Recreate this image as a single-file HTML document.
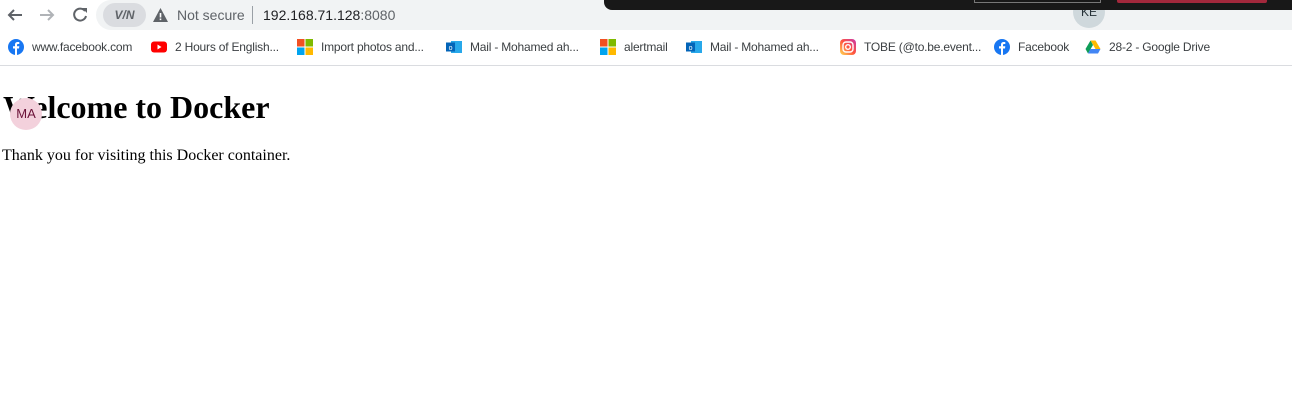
<!DOCTYPE html>
<html><head><style>
*{box-sizing:border-box}
body{margin:0;width:1292px;height:401px;overflow:hidden;background:#fff;position:relative;font-family:"Liberation Sans",sans-serif}
.top{position:absolute;left:0;top:0;width:1292px;height:30px;background:#fff}
.omni{position:absolute;left:96px;top:0;width:1196px;height:30px;background:#f1f3f4;border-radius:15px 0 0 15px}
.bm{position:absolute;top:30px;left:0;width:1292px;height:36px;border-bottom:1px solid #dadce0;font-size:12px;color:#3c4043;letter-spacing:-0.2px}
.bm span{position:absolute;top:10px;white-space:nowrap}
.ic{position:absolute;top:9px;width:16px;height:16px}
.content{position:absolute;top:68px;left:0;right:0;font-family:"Liberation Serif",serif;color:#000}
h1{font-size:32px;margin:21px 3px;line-height:37px}
p{font-size:16px;margin:0 2px;line-height:18px}
</style></head><body>
<div class="top"></div>
<div class="omni"></div>
<svg style="position:absolute;left:6px;top:6px" width="18" height="18"><path d="M16 9H3M8 4L3 9l5 5" stroke="#5f6368" stroke-width="2" fill="none"/></svg>
<svg style="position:absolute;left:38px;top:6px" width="18" height="18"><path d="M2 9h13M10 4l5 5-5 5" stroke="#b0b3b7" stroke-width="2" fill="none"/></svg>
<svg style="position:absolute;left:71px;top:6px" width="18" height="18"><path d="M14 5A6 6 0 1 0 15 10" stroke="#5f6368" stroke-width="2" fill="none"/><path d="M11 2h5v5z" fill="#5f6368"/></svg>
<div style="position:absolute;left:103px;top:3px;width:43px;height:24px;border-radius:12px;background:#dadce0;font-size:12px;font-weight:bold;color:#5f6368;text-align:center;line-height:24px;font-style:italic">V/N</div>
<svg style="position:absolute;left:153px;top:8px" width="15" height="14"><path d="M7.5 0L15 14H0z" fill="#5f6368"/><rect x="6.7" y="5" width="1.6" height="4.5" fill="#fff"/><rect x="6.7" y="10.5" width="1.6" height="1.6" fill="#fff"/></svg>
<div style="position:absolute;left:177px;top:7px;font-size:14px;color:#5f6368">Not secure</div>
<div style="position:absolute;left:252px;top:6px;width:1px;height:18px;background:#9aa0a6"></div>
<div style="position:absolute;left:263px;top:7px;font-size:14px;color:#202124">192.168.71.128<span style="color:#5f6368">:8080</span></div>
<div style="position:absolute;left:1073px;top:-4px;width:32px;height:32px;border-radius:50%;background:#cfd8dc;font-size:12px;color:#263238;text-align:center;line-height:32px">KE</div>
<div style="position:absolute;left:604px;top:0;width:688px;height:10px;background:#181818;border-radius:0 0 0 8px"></div>
<div style="position:absolute;left:974px;top:0;width:127px;height:3px;border:1px solid #777;border-top:none"></div>
<div style="position:absolute;left:1117px;top:0;width:150px;height:3px;background:#a3283c;border-radius:0 0 2px 2px"></div>
<div class="bm">
<svg class="ic" style="left:8px" viewBox="0 0 16 16"><circle cx="8" cy="8" r="8" fill="#1877f2"/><path d="M9 16V9.5h2l.3-2.2H9V6c0-.6.2-1 1-1h1.3V3.1C11 3 10.4 3 9.7 3 8.2 3 7 3.9 7 5.6v1.7H5v2.2h2V16z" fill="#fff"/></svg><span style="left:32px">www.facebook.com</span>
<svg class="ic" style="left:151px" viewBox="0 0 16 16"><rect y="2.5" width="16" height="11" rx="3" fill="#f00"/><path d="M6.5 5.5v5l4-2.5z" fill="#fff"/></svg><span style="left:175px">2 Hours of English...</span>
<svg class="ic" style="left:297px" viewBox="0 0 16 16"><rect width="7.5" height="7.5" fill="#f25022"/><rect x="8.5" width="7.5" height="7.5" fill="#7fba00"/><rect y="8.5" width="7.5" height="7.5" fill="#00a4ef"/><rect x="8.5" y="8.5" width="7.5" height="7.5" fill="#ffb900"/></svg><span style="left:321px">Import photos and...</span>
<svg class="ic" style="left:446px" viewBox="0 0 16 16"><rect x="5" y="2" width="11" height="12" fill="#28a8ea"/><rect x="0" y="3.5" width="9" height="9" fill="#0364b8"/><text x="4.5" y="11" font-size="7" fill="#fff" text-anchor="middle" font-family="Liberation Sans">o</text></svg><span style="left:470px">Mail - Mohamed ah...</span>
<svg class="ic" style="left:600px" viewBox="0 0 16 16"><rect width="7.5" height="7.5" fill="#f25022"/><rect x="8.5" width="7.5" height="7.5" fill="#7fba00"/><rect y="8.5" width="7.5" height="7.5" fill="#00a4ef"/><rect x="8.5" y="8.5" width="7.5" height="7.5" fill="#ffb900"/></svg><span style="left:624px">alertmail</span>
<svg class="ic" style="left:686px" viewBox="0 0 16 16"><rect x="5" y="2" width="11" height="12" fill="#28a8ea"/><rect x="0" y="3.5" width="9" height="9" fill="#0364b8"/><text x="4.5" y="11" font-size="7" fill="#fff" text-anchor="middle" font-family="Liberation Sans">o</text></svg><span style="left:710px">Mail - Mohamed ah...</span>
<svg class="ic" style="left:840px" viewBox="0 0 16 16"><defs><linearGradient id="g" x1="0" y1="1" x2="1" y2="0"><stop offset="0" stop-color="#fd5"/><stop offset=".5" stop-color="#ff543e"/><stop offset="1" stop-color="#c837ab"/></linearGradient></defs><rect width="16" height="16" rx="4" fill="url(#g)"/><rect x="3" y="3" width="10" height="10" rx="3" fill="none" stroke="#fff" stroke-width="1.4"/><circle cx="8" cy="8" r="2.3" fill="none" stroke="#fff" stroke-width="1.4"/></svg><span style="left:864px">TOBE (@to.be.event...</span>
<svg class="ic" style="left:994px" viewBox="0 0 16 16"><circle cx="8" cy="8" r="8" fill="#1877f2"/><path d="M9 16V9.5h2l.3-2.2H9V6c0-.6.2-1 1-1h1.3V3.1C11 3 10.4 3 9.7 3 8.2 3 7 3.9 7 5.6v1.7H5v2.2h2V16z" fill="#fff"/></svg><span style="left:1018px">Facebook</span>
<svg class="ic" style="left:1085px" viewBox="0 0 16 16"><path d="M5.5 1.5h5l5 8.5h-5z" fill="#ffba00"/><path d="M5.5 1.5L0.5 10l2.5 4.5 5-8.5z" fill="#0f9d58"/><path d="M3 14.5h10l2.5-4.5h-10z" fill="#4285f4"/></svg><span style="left:1109px">28-2 - Google Drive</span>
</div>
<div class="content"><h1>Welcome to Docker</h1><p>Thank you for visiting this Docker container.</p></div>
<div style="position:absolute;left:10px;top:98px;width:32px;height:32px;border-radius:50%;background:#f3d1dc;color:#6b1238;font-size:13px;text-align:center;line-height:32px">MA</div>
</body></html>
